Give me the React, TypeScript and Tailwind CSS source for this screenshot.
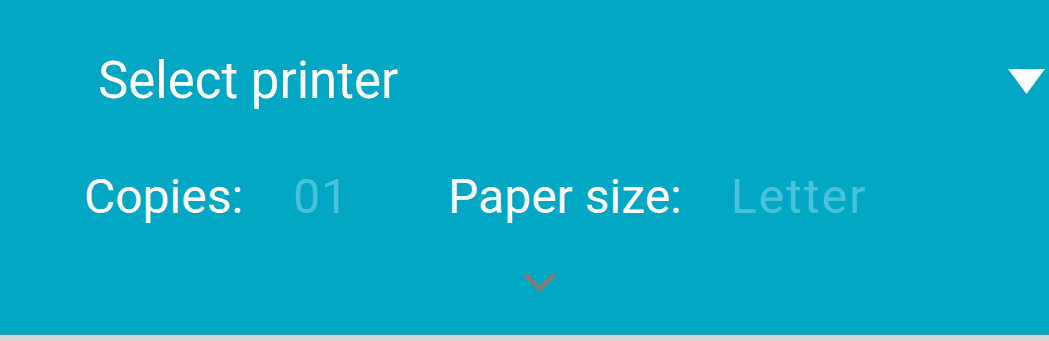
export default function App() {
  return (
    <div className="w-[1049px] h-[341px] bg-[#d5d5d5] flex flex-col" style={{ fontFamily: "Roboto, 'Noto Sans', sans-serif" }}>
      <div className="h-[335px] bg-[#02a7c4] flex flex-col border-b border-[#3f97a8]">
        <div className="flex items-center justify-between pl-[98px] pr-[4px] pt-[51px]">
          <span className="text-white text-[51px] leading-[60px]">Select printer</span>
          <svg width="37" height="25" viewBox="0 0 37 25">
            <polygon points="0,0 37,0 18.5,25" fill="#ffffff" />
          </svg>
        </div>
        <div className="flex items-center pl-[84px] pt-[56px] text-[48px] leading-[60px]">
          <span className="text-white">Copies:</span>
          <span className="text-[#4bc2dc] ml-[50px] tracking-[1px]">01</span>
          <span className="text-white ml-[99px]">Paper size:</span>
          <span className="text-[#4bc2dc] ml-[49px] tracking-[2px]">Letter</span>
        </div>
        <div className="flex justify-center pt-[45px] pl-[30px]">
          <svg width="34" height="22" viewBox="0 0 34 22">
            <polyline points="2.5,2.5 17,17 31.5,2.5" fill="none" stroke="#7d7d7d" strokeWidth="5" />
          </svg>
        </div>
      </div>
    </div>
  );
}
